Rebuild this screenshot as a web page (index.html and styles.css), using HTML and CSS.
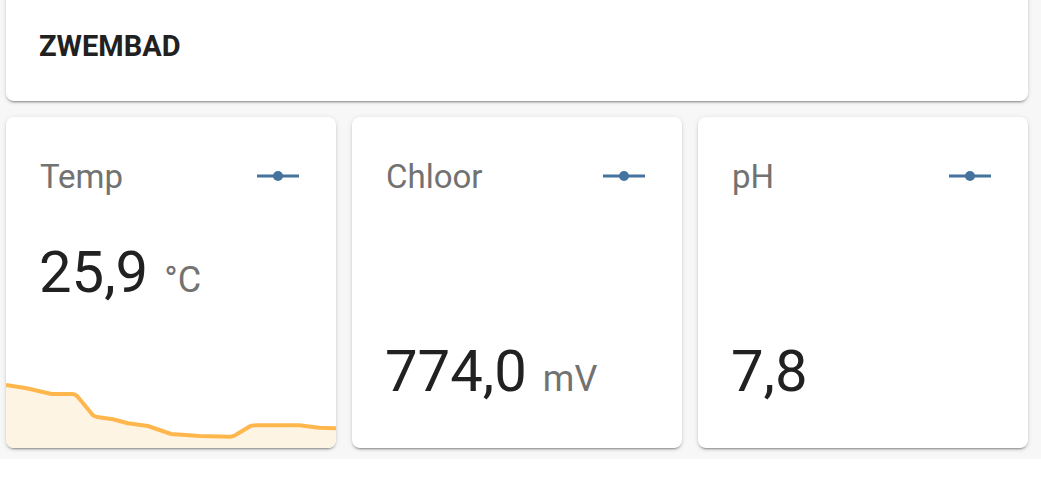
FILE: index.html
```html
<!DOCTYPE html>
<html lang="nl">

<head>
    <meta charset="UTF-8">
    <meta name="viewport" content="width=device-width, initial-scale=1.0">
    <title>Zwembad</title>
    <link rel="stylesheet" href="styles.css">
</head>

<body>
    <div class="view">
        <div class="card title-card">
            <h2 class="title">ZWEMBAD</h2>
        </div>

        <div class="sensor-row">
            <div class="card sensor-card">
                <div class="sensor-header">
                    <span class="sensor-name">Temp</span>
                    <svg class="sensor-icon" viewBox="0 0 42 12">
                        <line x1="0" y1="6" x2="42" y2="6" />
                        <circle cx="21" cy="6" r="5" />
                    </svg>
                </div>
                <div class="sensor-info">
                    <span class="sensor-value">25,9</span><span class="sensor-unit">°C</span>
                </div>
                <svg class="sensor-graph" viewBox="0 0 331 70" preserveAspectRatio="none">
                    <path class="graph-fill"
                        d="M0,7 L20.7,10.3 L45.7,16 L65.7,16 Q70,16 72.3,19.3 L87,37 Q89,38.7 93,39.3 L107.3,41.3 L122.3,45.3 L142.3,48 L165.7,56 L194,58 L225,58.7 Q228,58.7 231,56.5 L244,48.7 Q246,47.3 252.3,47.3 L294,47.3 L314,49.7 L331,50.3 L331,70 L0,70 Z" />
                    <path class="graph-line"
                        d="M0,7 L20.7,10.3 L45.7,16 L65.7,16 Q70,16 72.3,19.3 L87,37 Q89,38.7 93,39.3 L107.3,41.3 L122.3,45.3 L142.3,48 L165.7,56 L194,58 L225,58.7 Q228,58.7 231,56.5 L244,48.7 Q246,47.3 252.3,47.3 L294,47.3 L314,49.7 L331,50.3" />
                </svg>
            </div>

            <div class="card sensor-card">
                <div class="sensor-header">
                    <span class="sensor-name">Chloor</span>
                    <svg class="sensor-icon" viewBox="0 0 42 12">
                        <line x1="0" y1="6" x2="42" y2="6" />
                        <circle cx="21" cy="6" r="5" />
                    </svg>
                </div>
                <div class="sensor-info at-bottom">
                    <span class="sensor-value">774,0</span><span class="sensor-unit">mV</span>
                </div>
            </div>

            <div class="card sensor-card">
                <div class="sensor-header">
                    <span class="sensor-name">pH</span>
                    <svg class="sensor-icon" viewBox="0 0 42 12">
                        <line x1="0" y1="6" x2="42" y2="6" />
                        <circle cx="21" cy="6" r="5" />
                    </svg>
                </div>
                <div class="sensor-info at-bottom">
                    <span class="sensor-value">7,8</span>
                </div>
            </div>
        </div>
    </div>
</body>

</html>
```

FILE: styles.css
```css
body {
    margin: 0;
    background-color: white;
    font-family: Roboto, "Noto Sans", sans-serif;
    overflow: hidden;
}

.view {
    height: 459px;
    box-sizing: border-box;
    padding: 0 13px 0 6px;
    background-color: #f7f7f7;
    display: flex;
    flex-direction: column;
    gap: 16px;
}

.card {
    background-color: white;
    border-radius: 8px;
    box-shadow: 0 2px 2px 0 rgba(0, 0, 0, 0.14), 0 1px 5px 0 rgba(0, 0, 0, 0.12), 0 3px 1px -2px rgba(0, 0, 0, 0.2);
}

.title-card {
    margin-top: -9px;
    height: 110px;
    display: flex;
    align-items: center;
    padding-left: 33px;
}

.title {
    margin: 0;
    font-size: 29px;
    font-weight: bold;
    color: #212121;
}

.sensor-row {
    display: grid;
    grid-template-columns: repeat(3, 1fr);
    gap: 16px;
}

.sensor-card {
    height: 331px;
    display: flex;
    flex-direction: column;
    overflow: hidden;
}

.sensor-header {
    display: flex;
    justify-content: space-between;
    align-items: center;
    height: 48px;
    margin-top: 35px;
    padding: 0 37px 0 34px;
}

.sensor-name {
    font-size: 33px;
    color: #727272;
}

.sensor-icon {
    width: 42px;
    height: 12px;
}

.sensor-icon line {
    stroke: #44739e;
    stroke-width: 3;
}

.sensor-icon circle {
    fill: #44739e;
}

.sensor-info {
    margin-top: 40px;
    padding: 0 33px;
    line-height: 64px;
    white-space: nowrap;
}

.sensor-info.at-bottom {
    margin-top: auto;
    padding-bottom: 30px;
}

.sensor-value {
    font-size: 58px;
    color: #212121;
}

.sensor-unit {
    font-size: 36px;
    color: #727272;
    margin-left: 16px;
}

.sensor-graph {
    margin-top: auto;
    display: block;
    width: 100%;
    height: 70px;
}

.graph-fill {
    fill: #fef4e4;
}

.graph-line {
    fill: none;
    stroke: #ffb74d;
    stroke-width: 4;
    stroke-linejoin: round;
}
```
